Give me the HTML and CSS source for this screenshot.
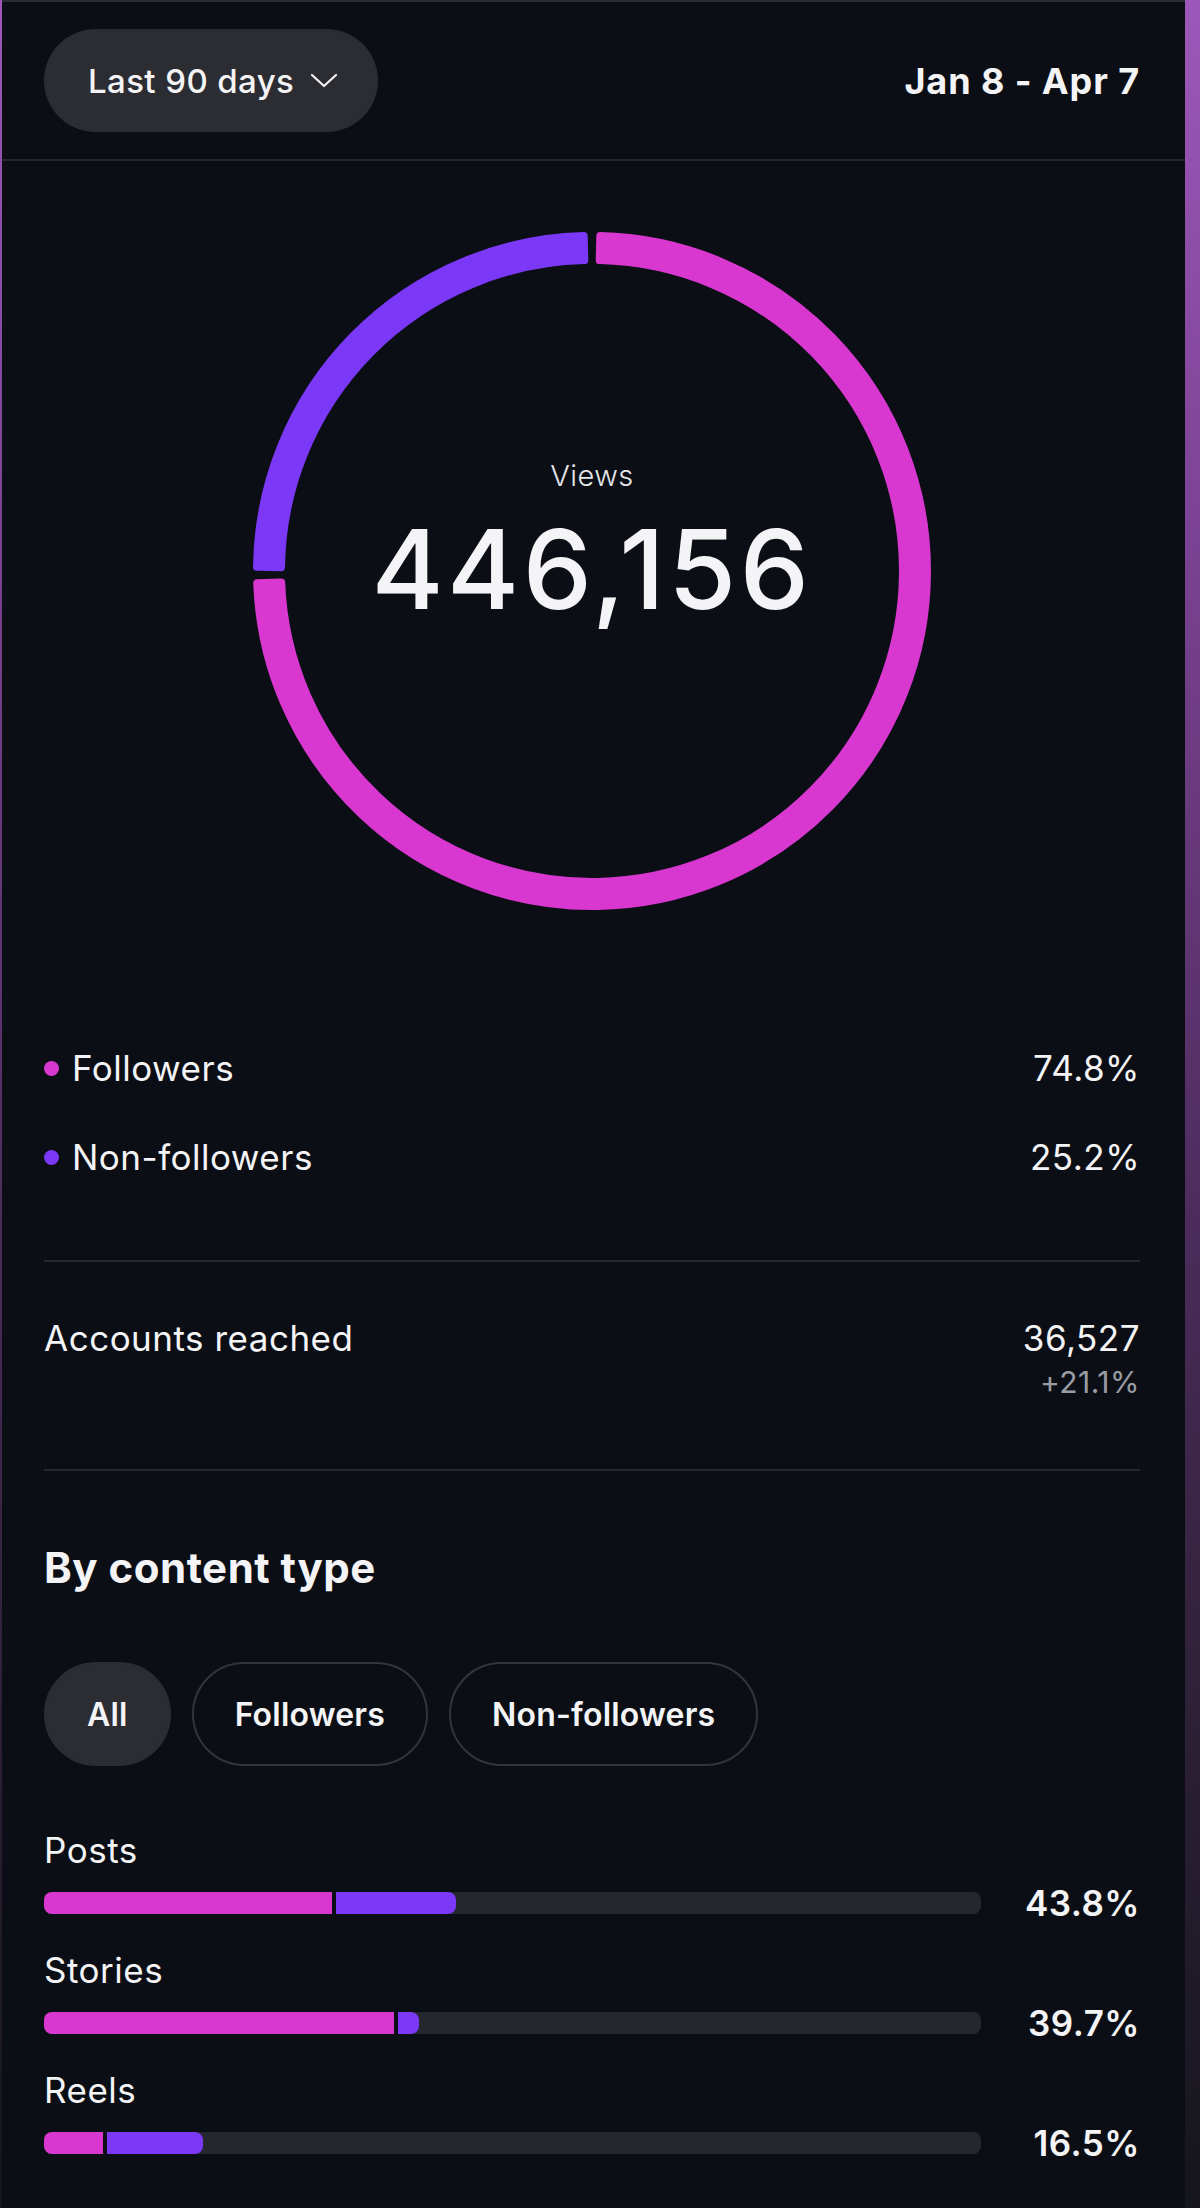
FILE: index.html
```html
<!DOCTYPE html>
<html lang="en">
<head>
    <meta charset="UTF-8">
    <meta name="viewport" content="width=device-width, initial-scale=1.0">
    <title>Views | Insights</title>
    <link rel="stylesheet" href="styles.css">
</head>
<body>
    <div class="screen">
        <header class="topbar">
            <button class="range-btn">
                Last 90 days
                <svg class="chevron" width="28" height="15" viewBox="0 0 28 15">
                    <polyline points="2,2 14,13 26,2" />
                </svg>
            </button>
            <span class="range-dates">Jan 8 - Apr 7</span>
        </header>

        <div class="content">
            <section class="views">
                <div class="donut">
                    <svg class="donut-ring" width="678" height="678" viewBox="0 0 678 678">
                        <path class="ring-followers" d="M347.30 4.10 A335 335 0 1 1 4.22 351.27 L28.21 350.40 A311 311 0 1 0 346.71 28.10 Z" />
                        <path class="ring-nonfollowers" d="M4.03 334.85 A335 335 0 0 1 330.70 4.10 L331.29 28.10 A311 311 0 0 0 28.02 335.15 Z" />
                    </svg>
                    <div class="donut-label">
                        <div class="donut-title">Views</div>
                        <div class="donut-value">446,156</div>
                    </div>
                </div>

                <ul class="legend">
                    <li>
                        <span class="dot dot-followers"></span>
                        <span class="legend-name">Followers</span>
                        <span class="legend-value">74.8%</span>
                    </li>
                    <li>
                        <span class="dot dot-nonfollowers"></span>
                        <span class="legend-name">Non-followers</span>
                        <span class="legend-value">25.2%</span>
                    </li>
                </ul>
            </section>

            <section class="reach">
                <span>Accounts reached</span>
                <div class="reach-stat">
                    <div>36,527</div>
                    <div class="reach-change">+21.1%</div>
                </div>
            </section>

            <section class="content-type">
                <h2 class="section-title">By content type</h2>
                <div class="filters">
                    <button class="filter active">All</button>
                    <button class="filter">Followers</button>
                    <button class="filter">Non-followers</button>
                </div>

                <div class="breakdown">
                    <div class="breakdown-item">
                        <div class="breakdown-label">Posts</div>
                        <div class="bar-row">
                            <div class="bar-track">
                                <span class="bar-followers" style="width: 30.7%"></span>
                                <span class="bar-nonfollowers" style="width: 13.3%"></span>
                            </div>
                            <span class="bar-pct">43.8%</span>
                        </div>
                    </div>
                    <div class="breakdown-item">
                        <div class="breakdown-label">Stories</div>
                        <div class="bar-row">
                            <div class="bar-track">
                                <span class="bar-followers" style="width: 37.4%"></span>
                                <span class="bar-nonfollowers" style="width: 2.6%"></span>
                            </div>
                            <span class="bar-pct">39.7%</span>
                        </div>
                    </div>
                    <div class="breakdown-item">
                        <div class="breakdown-label">Reels</div>
                        <div class="bar-row">
                            <div class="bar-track">
                                <span class="bar-followers" style="width: 6.3%"></span>
                                <span class="bar-nonfollowers" style="width: 10.7%"></span>
                            </div>
                            <span class="bar-pct">16.5%</span>
                        </div>
                    </div>
                </div>
            </section>
        </div>
    </div>
</body>
</html>
```

FILE: styles.css
```css
* {
    margin: 0;
    padding: 0;
    box-sizing: border-box;
}
body {
    min-height: 100vh;
    background: linear-gradient(180deg, #9d58b9 0%, #7a4292 25%, #4d2c5c 55%, #2a1f33 80%, #15151c 100%);
    font-family: Inter, "Noto Sans", sans-serif;
    color: #f4f4f6;
    letter-spacing: 0.5px;
}
.screen {
    margin-left: 2px;
    width: 1183px;
    min-height: 2208px;
    background: #0b0e15;
    border-top: 2px solid #2a2c33;
}
.topbar {
    display: flex;
    align-items: center;
    justify-content: space-between;
    padding: 27px 45px 27px 42px;
    border-bottom: 2px solid #24262d;
}
.range-btn {
    display: flex;
    align-items: center;
    gap: 16px;
    height: 103px;
    padding: 0 40px 0 44px;
    border: none;
    border-radius: 52px;
    background: #2b2d33;
    color: #f4f4f6;
    font-family: inherit;
    font-size: 33px;
    font-weight: 500;
    letter-spacing: 0.4px;
}
.chevron polyline {
    fill: none;
    stroke: #f4f4f6;
    stroke-width: 2.2;
    stroke-linecap: round;
    stroke-linejoin: round;
}
.range-dates {
    font-size: 36px;
    font-weight: 700;
    letter-spacing: 0.9px;
}
.content {
    padding: 0 45px 0 42px;
}
.views {
    padding-bottom: 79px;
    border-bottom: 2px solid #262830;
}
.donut {
    display: grid;
    justify-content: center;
    margin-top: 71px;
}
.donut-ring,
.donut-label {
    grid-area: 1 / 1;
}
.ring-followers {
    fill: #d837d0;
    stroke: #d837d0;
    stroke-width: 8;
    stroke-linejoin: round;
}
.ring-nonfollowers {
    fill: #7b38f7;
    stroke: #7b38f7;
    stroke-width: 8;
    stroke-linejoin: round;
}
.donut-label {
    align-self: start;
    margin-top: 226px;
    text-align: center;
}
.donut-title {
    font-size: 29px;
    line-height: 36px;
    font-weight: 300;
    color: #e6e6ea;
}
.donut-value {
    margin-top: 15px;
    font-size: 110px;
    line-height: 120px;
    font-weight: 500;
    letter-spacing: 3.5px;
}
.legend {
    list-style: none;
    margin-top: 134px;
    display: flex;
    flex-direction: column;
    gap: 41px;
}
.legend li {
    display: flex;
    align-items: center;
    font-size: 35px;
    line-height: 48px;
}
.dot {
    width: 15px;
    height: 15px;
    border-radius: 50%;
    margin-right: 13px;
}
.dot-followers {
    background: #d837d0;
}
.dot-nonfollowers {
    background: #7b38f7;
}
.legend-name {
    flex: 1;
}
.reach {
    display: flex;
    justify-content: space-between;
    align-items: flex-start;
    padding: 52px 0 71px;
    border-bottom: 2px solid #262830;
    font-size: 35px;
    line-height: 48px;
}
.reach-stat {
    text-align: right;
}
.reach-change {
    margin-top: 4px;
    font-size: 30px;
    line-height: 32px;
    color: #9a9ca3;
}
.content-type {
    padding-top: 73px;
}
.section-title {
    font-size: 42px;
    line-height: 48px;
    font-weight: 700;
}
.filters {
    display: flex;
    gap: 21px;
    margin-top: 70px;
}
.filter {
    height: 104px;
    padding: 0 41px;
    border: 2px solid #33353c;
    border-radius: 52px;
    background: transparent;
    color: #f4f4f6;
    font-family: inherit;
    font-size: 32px;
    font-weight: 600;
    letter-spacing: 0.2px;
}
.filter.active {
    background: #2b2d33;
    border-color: #2b2d33;
}
.breakdown {
    margin-top: 60px;
    display: flex;
    flex-direction: column;
    gap: 32px;
}
.breakdown-label {
    font-size: 35px;
    line-height: 48px;
}
.bar-row {
    display: flex;
    align-items: center;
    height: 22px;
    margin-top: 18px;
}
.bar-track {
    flex: 1;
    display: flex;
    height: 22px;
    background: #25272e;
    border-radius: 8px;
    overflow: hidden;
}
.bar-followers {
    background: #d837d0;
}
.bar-nonfollowers {
    background: #7b38f7;
    border-left: 4px solid #0b0e15;
    border-radius: 0 8px 8px 0;
}
.bar-pct {
    width: 159px;
    text-align: right;
    font-size: 35px;
    line-height: 22px;
    font-weight: 600;
}
```
